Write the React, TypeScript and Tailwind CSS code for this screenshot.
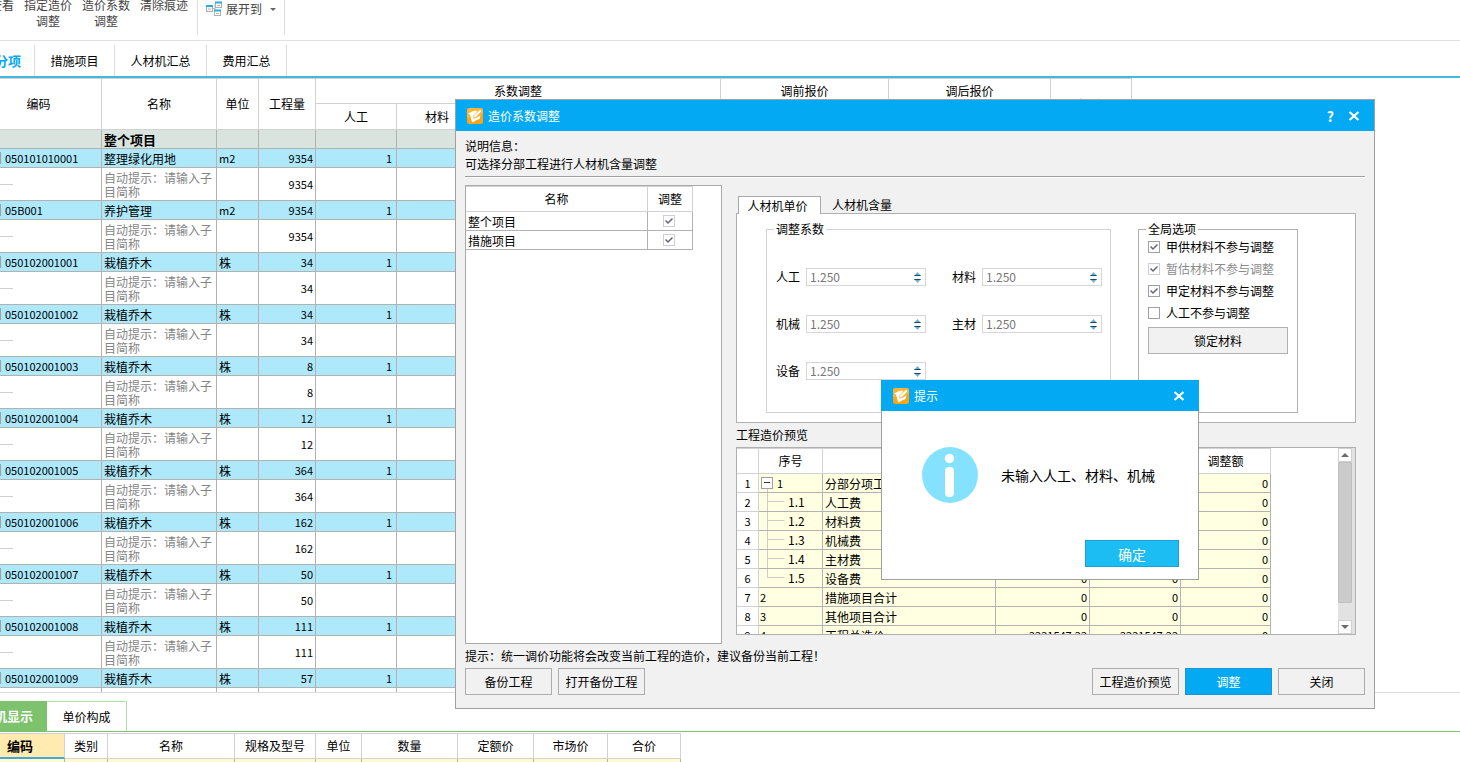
import { Fragment } from "react";
import clsx from "clsx";

type Item = {
	code: string;
	name: string;
	unit: string;
	amount: number;
};

const items: Item[] = [
	{ code: "050101010001", name: "整理绿化用地", unit: "m2", amount: 9354 },
	{ code: "05B001", name: "养护管理", unit: "m2", amount: 9354 },
	{ code: "050102001001", name: "栽植乔木", unit: "株", amount: 34 },
	{ code: "050102001002", name: "栽植乔木", unit: "株", amount: 34 },
	{ code: "050102001003", name: "栽植乔木", unit: "株", amount: 8 },
	{ code: "050102001004", name: "栽植乔木", unit: "株", amount: 12 },
	{ code: "050102001005", name: "栽植乔木", unit: "株", amount: 364 },
	{ code: "050102001006", name: "栽植乔木", unit: "株", amount: 162 },
	{ code: "050102001007", name: "栽植乔木", unit: "株", amount: 50 },
	{ code: "050102001008", name: "栽植乔木", unit: "株", amount: 111 },
	{ code: "050102001009", name: "栽植乔木", unit: "株", amount: 57 },
];

const preview = [
	{ no: "1", name: "分部分项工程", value: "0", level: 0 },
	{ no: "1.1", name: "人工费", value: "0", level: 1 },
	{ no: "1.2", name: "材料费", value: "0", level: 1 },
	{ no: "1.3", name: "机械费", value: "0", level: 1 },
	{ no: "1.4", name: "主材费", value: "0", level: 1 },
	{ no: "1.5", name: "设备费", value: "0", level: 1 },
	{ no: "2", name: "措施项目合计", value: "0", level: 2 },
	{ no: "3", name: "其他项目合计", value: "0", level: 2 },
	{ no: "4", name: "工程总造价", value: "2221547.22", level: 2 },
];

const factors = ["人工", "材料", "机械", "主材", "设备"];

const options = [
	{ label: "甲供材料不参与调整", checked: true, disabled: false },
	{ label: "暂估材料不参与调整", checked: true, disabled: true },
	{ label: "甲定材料不参与调整", checked: true, disabled: false },
	{ label: "人工不参与调整", checked: false, disabled: false },
];

const headCell = "border-r border-b border-[#d2d2d2] p-0 font-normal";
const bodyCell = "border-r border-b border-[#b2b2b2] px-[2px] py-0";
const nameCell = "border-r border-b border-[#b2b2b2] px-[2px] pt-[2px] pb-0 leading-4";

function AppIcon() {
	return (
		<svg width="16" height="16" viewBox="0 0 16 16" aria-hidden="true">
			<rect width="16" height="16" rx="2.5" fill="#f9a51a" />
			<path d="M0 2.5A2.5 2.5 0 0 1 2.5 0h11A2.5 2.5 0 0 1 16 2.5V6L0 10z" fill="#fbb436" />
			<path
				d="M1.2 5.2C3 5 6 2.6 8.500 2.500L11 4 7 8l.2 2.200 2.400-.4L13.500 7c-.8 1.600 0 3-1.300 4.200C10 11.800 7.500 13 5.800 14.500 4 13.500 4.200 9 2.800 6.600z"
				fill="#fff"
			/>
			<path d="M6.500 10.200 6.800 7.600 13 1.400l2 1.600-6 6.400z" fill="#fff" stroke="#f9ad30" strokeWidth=".7" />
		</svg>
	);
}

function CloseIcon() {
	return (
		<svg width="12" height="10" viewBox="0 0 12 10" aria-hidden="true">
			<path d="M1.5 1 10.5 9M10.5 1 1.5 9" stroke="#fff" strokeWidth="2.2" />
		</svg>
	);
}

type TickProps = {
	id: string;
	checked: boolean;
	light?: boolean;
	disabled?: boolean;
	label?: string;
};

function Tick({ id, checked, light, disabled, label }: TickProps) {
	return (
		<span className="relative block size-3 shrink-0">
			<input
				id={id}
				type="checkbox"
				defaultChecked={checked}
				disabled={disabled}
				aria-label={label}
				className={clsx(
					"peer block size-3 appearance-none border bg-white",
					light ? "border-[#cfcfcf]" : "border-[#a0a0a0]"
				)}
			/>
			<svg
				viewBox="0 0 12 12"
				className="pointer-events-none absolute inset-0 hidden size-3 peer-checked:block"
				aria-hidden="true"
			>
				<path d="M2.5 5.5 5 8 9.5 3.5" fill="none" stroke="#666678" strokeWidth="1.5" />
			</svg>
		</span>
	);
}

function Toolbar() {
	const button = "-mt-[3px] ml-[10px] w-12 leading-4";
	return (
		<div className="flex h-[41px] shrink-0 items-start border-b border-[#e0e0e0] text-[#444]">
			<button className="-mt-[3px] flex w-[14px] justify-end leading-4 whitespace-nowrap">查看</button>
			<button className={button}>
				指定造价
				<br />
				调整
			</button>
			<button className={button}>
				造价系数
				<br />
				调整
			</button>
			<button className={button}>清除痕迹</button>
			<div className="ml-[9px] h-[35px] border-x border-[#dcdcdc] px-2">
				<button className="flex h-[18px] items-center">
					<svg width="17" height="16" viewBox="0 0 17 16" aria-hidden="true">
						<path d="M6.5 7.5H9M9 3.5v8M9 3.5h1M9 11.5h1" stroke="#b8b8b8" fill="none" />
						<rect x=".5" y="4.5" width="6" height="6" fill="#f5f5f5" stroke="#a8b0b8" />
						<rect x="9.5" y="1.5" width="6" height="5" fill="#fff" stroke="#a8b0b8" />
						<rect x="8.5" y="9.5" width="6" height="5" fill="#fff" stroke="#a8b0b8" />
						<path d="M0 5h7M9 1.5h7M8 9.5h7" stroke="#21aee8" strokeWidth="2" />
						<path d="M2 8h3M11 4.500h3M10 12.500h3" stroke="#e0b080" />
					</svg>
					<span className="ml-[3px]">展开到</span>
					<svg className="ml-2" width="6" height="3" viewBox="0 0 6 3" aria-hidden="true">
						<path d="M0 0h6L3 3z" fill="#666" />
					</svg>
				</button>
			</div>
		</div>
	);
}

function MainTabs() {
	return (
		<nav className="flex h-[37px] shrink-0 border-b-2 border-[#41b8e2] pt-1">
			<button className="flex w-[35px] items-center justify-end whitespace-nowrap border-r border-[#dcdcdc] pr-[13px] text-[13px] font-bold text-[#03a9f2]">
				分部分项
			</button>
			<button className="w-20 border-r border-[#dcdcdc]">措施项目</button>
			<button className="w-[92px] border-r border-[#dcdcdc]">人材机汇总</button>
			<button className="w-20 border-r border-[#dcdcdc]">费用汇总</button>
		</nav>
	);
}

function ItemTable() {
	return (
		<table className="w-[1132px] table-fixed border-separate border-spacing-0 border-t border-[#d2d2d2]">
			<colgroup>
				<col className="w-[102px]" />
				<col className="w-[115px]" />
				<col className="w-[42px]" />
				<col className="w-[57px]" />
				<col className="w-[81px]" />
				<col className="w-[81px]" />
				<col className="w-[81px]" />
				<col className="w-[81px]" />
				<col className="w-[81px]" />
				<col className="w-[84px]" />
				<col className="w-[84px]" />
				<col className="w-[81px]" />
				<col className="w-[81px]" />
				<col className="w-[81px]" />
			</colgroup>
			<thead>
				<tr className="h-[25px]">
					<th rowSpan={2} className={clsx(headCell, "pr-6")}>编码</th>
					<th rowSpan={2} className={headCell}>名称</th>
					<th rowSpan={2} className={headCell}>单位</th>
					<th rowSpan={2} className={headCell}>工程量</th>
					<th colSpan={5} className={headCell}>系数调整</th>
					<th colSpan={2} className={headCell}>调前报价</th>
					<th colSpan={2} className={headCell}>调后报价</th>
					<th rowSpan={2} className={headCell}>调价</th>
				</tr>
				<tr className="h-[26px]">
					{factors.map((f) => (
						<th key={f} className={headCell}>{f}</th>
					))}
					<th className={headCell}>单价</th>
					<th className={headCell}>合价</th>
					<th className={headCell}>单价</th>
					<th className={headCell}>合价</th>
				</tr>
			</thead>
			<tbody className="leading-[18px]">
				<tr className="h-[19px] bg-[#dae4de]">
					<td className={bodyCell} />
					<td className={clsx(nameCell, "text-[13px] font-bold")}>整个项目</td>
					{Array.from({ length: 12 }, (_, i) => (
						<td key={i} className={bodyCell} />
					))}
				</tr>
				{items.map((item, row) => (
					<Fragment key={item.code}>
						<tr className="h-[19px] bg-[#ade9fb]">
							<td className={clsx(bodyCell, "pl-0")}>
								<div className="flex items-center gap-1 text-[11px]">
									<span className="h-3 w-px bg-[#a0a0a0]" />
									{item.code}
								</div>
							</td>
							<td className={nameCell}>{item.name}</td>
							<td className={item.unit === "m2" ? clsx(bodyCell, "text-[11px]") : nameCell}>
								{item.unit}
							</td>
							<td className={clsx(bodyCell, "text-right text-[11px]")}>{item.amount}</td>
							<td className={clsx(bodyCell, "pr-1 text-right text-[11px]")}>1</td>
							{Array.from({ length: 9 }, (_, i) => (
								<td key={i} className={bodyCell} />
							))}
						</tr>
						<tr className="h-[33px]">
							<td className={clsx(bodyCell, "pl-0")}>
								<div className="h-px w-[13px] bg-[#d0d0d0]" />
							</td>
							<td className="border-r border-b border-[#b2b2b2] px-[2px] pt-[2px] pb-0 leading-[14px] text-[#858585]">
								{row < items.length - 1 && "自动提示：请输入子目简称"}
							</td>
							<td className={bodyCell} />
							<td className={clsx(bodyCell, "text-right text-[11px]")}>
								{row < items.length - 1 && item.amount}
							</td>
							{Array.from({ length: 10 }, (_, i) => (
								<td key={i} className={bodyCell} />
							))}
						</tr>
					</Fragment>
				))}
			</tbody>
		</table>
	);
}

function BottomPanel() {
	const cols = ["类别", "名称", "规格及型号", "单位", "数量", "定额价", "市场价", "合价"];
	return (
		<section className="mt-2 h-[61px] shrink-0 overflow-hidden">
			<div className="flex h-[31px] border-b border-[#7dc26c]">
				<button className="flex w-[47px] items-center justify-end whitespace-nowrap bg-[#7dc26c] pr-[14px] text-[13px] font-bold text-white">
					人材机显示
				</button>
				<button className="w-20 border-t border-r border-[#b2e0a0]">单价构成</button>
			</div>
			<table className="mt-px w-[681px] table-fixed border-separate border-spacing-0 border-t border-[#d2d2d2]">
				<colgroup>
					<col className="w-[65px]" />
					<col className="w-[43px]" />
					<col className="w-[127px]" />
					<col className="w-[81px]" />
					<col className="w-[46px]" />
					<col className="w-[96px]" />
					<col className="w-[76px]" />
					<col className="w-[74px]" />
					<col className="w-[73px]" />
				</colgroup>
				<thead>
					<tr className="h-[25px]">
						<th className="border-r border-b-2 border-r-[#d2d2d2] border-b-[#41a8dc] bg-[#ffebb0] p-0 pr-6 text-[13px] font-bold">
							编码
						</th>
						{cols.map((c) => (
							<th key={c} className={headCell}>{c}</th>
						))}
					</tr>
				</thead>
				<tbody>
					<tr className="h-[19px] bg-[#ffface]">
						{Array.from({ length: 9 }, (_, i) => (
							<td key={i} className={bodyCell} />
						))}
					</tr>
				</tbody>
			</table>
		</section>
	);
}

function ScopeTable() {
	return (
		<div className="w-[257px] shrink-0 border border-[#a9a9a9] bg-white">
			<table className="w-[227px] table-fixed border-separate border-spacing-0">
				<colgroup>
					<col className="w-[182px]" />
					<col className="w-[45px]" />
				</colgroup>
				<thead>
					<tr className="h-[26px]">
						<th className={clsx(headCell, "border-t")}>名称</th>
						<th className={clsx(headCell, "border-t")}>调整</th>
					</tr>
				</thead>
				<tbody className="leading-[18px]">
					{["整个项目", "措施项目"].map((name, i) => (
						<tr key={name} className="h-[19px]">
							<td className={nameCell}>{name}</td>
							<td className={clsx(bodyCell, "pr-1")}>
								<div className="flex justify-center">
									<Tick id={`scope-${i}`} checked light label={name} />
								</div>
							</td>
						</tr>
					))}
				</tbody>
			</table>
		</div>
	);
}

function FactorField({ label, id }: { label: string; id: string }) {
	return (
		<div className="flex h-[18px] w-[150px] items-center">
			<label htmlFor={id} className="w-[30px]">{label}</label>
			<div className="flex h-[18px] w-[120px] items-center border border-[#d6d6d6] bg-white pr-1">
				<input
					id={id}
					type="text"
					defaultValue="1.250"
					className="w-full min-w-0 pl-[3px] leading-4 text-[#777] outline-none"
				/>
				<div className="flex flex-col gap-[3px]">
					<button aria-label={`${label} +`} className="block">
						<svg width="7" height="4" viewBox="0 0 7 4" className="block" aria-hidden="true">
							<path d="M0 4 3.500 0 7 4z" fill="#6ab0dc" />
							<path d="M.5 3.500h6" stroke="#1c4668" />
						</svg>
					</button>
					<button aria-label={`${label} -`} className="block">
						<svg width="7" height="4" viewBox="0 0 7 4" className="block" aria-hidden="true">
							<path d="M0 0h7L3.500 4z" fill="#6ab0dc" />
							<path d="M.5.5h6" stroke="#1c4668" />
						</svg>
					</button>
				</div>
			</div>
		</div>
	);
}

function PricePanel() {
	return (
		<>
			<div className="flex h-[17px] pl-[2px]">
				<button className="relative h-[18px] w-[83px] border border-b-0 border-[#a9a9a9] bg-white pr-1 leading-4">
					人材机单价
				</button>
				<button className="px-[11px] leading-[18px]">人材机含量</button>
			</div>
			<div className="flex h-[210px] gap-[27px] border border-[#b0b0b0] bg-white pt-[6px] pb-[9px] pl-[29px]">
				<fieldset className="w-[345px] border border-[#d2d2d2] pl-[7px]">
					<legend className="px-[2px] leading-[18px]">调整系数</legend>
					<div className="flex flex-wrap gap-x-[26px] gap-y-[29px] pt-[30px] pl-[2px]">
						{factors.map((f, i) => (
							<FactorField key={f} id={`factor-${i}`} label={f} />
						))}
					</div>
				</fieldset>
				<fieldset className="w-40 border border-[#b0b0b0] px-[7px]">
					<legend className="px-[2px] leading-[18px]">全局选项</legend>
					<div className="flex flex-col gap-[6px] px-[2px] pt-px">
						{options.map((o, i) => (
							<div key={o.label} className="flex h-4 items-center gap-[6px]">
								<Tick id={`option-${i}`} checked={o.checked} disabled={o.disabled} light={o.disabled} />
								<label
									htmlFor={`option-${i}`}
									className={clsx("whitespace-nowrap", o.disabled && "text-[#8c8c8c]")}
								>
									{o.label}
								</label>
							</div>
						))}
						<button className="h-[27px] border border-[#b0b0b0] bg-[#f1f1f1]">锁定材料</button>
					</div>
				</fieldset>
			</div>
		</>
	);
}

function TreeCell({ no, level }: { no: string; level: number }) {
	if (level === 0) {
		return (
			<div className="flex h-[18px] items-center">
				<svg width="12" height="18" viewBox="0 0 12 18" className="ml-px" aria-hidden="true">
					<rect x=".5" y="3.500" width="11" height="11" fill="#fff" stroke="#a0a0a0" />
					<path d="M3 8.500h6" stroke="#333" />
					<path d="M6.500 15v3" stroke="#ccc" />
				</svg>
				<span className="ml-1">{no}</span>
			</div>
		);
	}
	if (level === 1) {
		return (
			<div className="flex h-[18px] items-center">
				<svg width="18" height="18" viewBox="0 0 18 18" className="ml-[7px]" aria-hidden="true">
					<path d={no === "1.5" ? "M.5 0v8.500h17" : "M.5 0v18M.5 8.500h17"} fill="none" stroke="#ccc" />
				</svg>
				<span className="ml-[3px] text-xs">{no}</span>
			</div>
		);
	}
	return <span>{no}</span>;
}

function PreviewTable() {
	return (
		<div className="flex h-[188px] border border-[#b0b0b0] bg-white">
			<div className="min-w-0 flex-1 overflow-hidden">
				<table className="w-[534px] table-fixed border-separate border-spacing-0 border-t border-[#d2d2d2]">
					<colgroup>
						<col className="w-[22px]" />
						<col className="w-[64px]" />
						<col className="w-[173px]" />
						<col className="w-[94px]" />
						<col className="w-[91px]" />
						<col className="w-[90px]" />
					</colgroup>
					<thead>
						<tr className="h-[25px]">
							<th className={headCell} />
							<th className={headCell}>序号</th>
							<th className={headCell}>名称</th>
							<th className={headCell}>调整前</th>
							<th className={headCell}>调整后</th>
							<th className={headCell}>调整额</th>
						</tr>
					</thead>
					<tbody className="text-[11px] leading-[18px]">
						{preview.map((row, i) => (
							<tr key={row.no} className="h-[19px] bg-[#ffffe1]">
								<th className={clsx(headCell, "bg-white")}>{i + 1}</th>
								<td className={clsx(bodyCell, "px-px")}>
									<TreeCell no={row.no} level={row.level} />
								</td>
								<td className={clsx(nameCell, "text-[12px]")}>{row.name}</td>
								<td className={clsx(bodyCell, "text-right")}>{row.value}</td>
								<td className={clsx(bodyCell, "text-right")}>{row.value}</td>
								<td className={clsx(bodyCell, "text-right")}>0</td>
							</tr>
						))}
					</tbody>
				</table>
			</div>
			<div className="flex w-[17px] flex-col bg-[#e2e2e2] pr-[3px]">
				<div className="flex h-[14px] items-center justify-center border border-[#d0d0d0] bg-white">
					<svg width="8" height="4" viewBox="0 0 8 4" aria-hidden="true">
						<path d="M0 4 4 0l4 4z" fill="#6a6a74" />
					</svg>
				</div>
				<div className="h-[141px] rounded-[1px] border border-[#c0c0c0] bg-[#cbcbcb]" />
				<div className="flex-1" />
				<div className="flex h-[14px] items-center justify-center border border-[#d0d0d0] bg-white">
					<svg width="8" height="4" viewBox="0 0 8 4" aria-hidden="true">
						<path d="M0 0h8L4 4z" fill="#6a6a74" />
					</svg>
				</div>
			</div>
		</div>
	);
}

function AdjustDialog() {
	const button = "h-[27px] w-[87px] border whitespace-nowrap";
	return (
		<div
			role="dialog"
			className="absolute top-[99px] right-[85px] left-[455px] border border-[#a0a0a0] bg-[#f1f1f1]"
		>
			<div className="flex h-[31px] items-center bg-[#03a9f2] pr-[14px] pl-[11px] text-white">
				<AppIcon />
				<h2 className="ml-[5px] flex-1">造价系数调整</h2>
				<button className="mr-[14px] text-[14px] leading-4 font-bold">?</button>
				<button aria-label="关闭">
					<CloseIcon />
				</button>
			</div>
			<div className="px-[9px] pt-[6px] pb-[13px]">
				<p className="leading-[18px]">说明信息：</p>
				<p className="leading-[18px]">可选择分部工程进行人材机含量调整</p>
				<div className="mt-[3px] h-[2px] border-t border-b border-t-[#a0a0a0] border-b-white" />
				<div className="mt-[7px] flex gap-[14px]">
					<ScopeTable />
					<div className="min-w-0 flex-1 pt-[11px] pr-[9px] pb-[9px]">
						<PricePanel />
						<p className="my-[3px] leading-[18px]">工程造价预览</p>
						<PreviewTable />
					</div>
				</div>
				<p className="my-[3px] leading-[18px]">
					提示：统一调价功能将会改变当前工程的造价，建议备份当前工程！
				</p>
				<div className="flex gap-[6px]">
					<button className={clsx(button, "border-[#adadad]")}>备份工程</button>
					<button className={clsx(button, "border-[#adadad]")}>打开备份工程</button>
					<button className={clsx(button, "ml-auto border-[#adadad]")}>工程造价预览</button>
					<button className={clsx(button, "border-[#1c94d2] bg-[#03a9f2] text-white")}>调整</button>
					<button className={clsx(button, "border-[#adadad]")}>关闭</button>
				</div>
			</div>
		</div>
	);
}

function PromptDialog() {
	return (
		<div role="alertdialog" className="absolute top-[380px] left-[881px] w-[318px] bg-white">
			<div className="flex h-[31px] items-center bg-[#03a9f2] pr-[14px] pl-3 text-white">
				<AppIcon />
				<h2 className="ml-[5px] flex-1">提示</h2>
				<button aria-label="关闭">
					<CloseIcon />
				</button>
			</div>
			<div className="border border-t-0 border-[#a0a0a0] pt-9 pr-[19px] pb-3 pl-10">
				<div className="flex items-center gap-[23px]">
					<svg width="56" height="56" viewBox="0 0 56 56" className="shrink-0" aria-hidden="true">
						<circle cx="28" cy="28" r="28" fill="#85e2ff" />
						<circle cx="27.500" cy="11.500" r="4.700" fill="#fff" />
						<rect x="23" y="20" width="9" height="30" rx="4" fill="#fff" />
					</svg>
					<p className="text-sm leading-5 whitespace-nowrap">未输入人工、材料、机械</p>
				</div>
				<div className="mt-[37px] flex justify-end">
					<button className="h-[27px] w-[94px] border border-[#1e9fd8] bg-[#1cbdf2] text-sm leading-5 text-white">
						确定
					</button>
				</div>
			</div>
		</div>
	);
}

export default function App() {
	return (
		<div className="relative flex h-screen flex-col overflow-hidden bg-white font-['Noto_Sans_CJK_SC',sans-serif] text-xs text-black">
			<Toolbar />
			<MainTabs />
			<main className="min-h-0 flex-1 overflow-hidden border-b border-[#dcdcdc]">
				<ItemTable />
			</main>
			<BottomPanel />
			<AdjustDialog />
			<PromptDialog />
		</div>
	);
}
